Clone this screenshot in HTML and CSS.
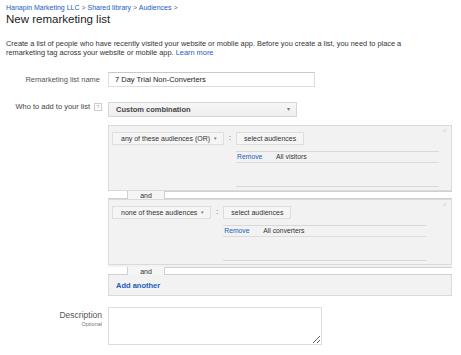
FILE: index.html
```html
<!DOCTYPE html>
<html>
<head>
<meta charset="utf-8">
<link rel="stylesheet" href="styles.css">
</head>
<body>
<div class="crumbs"><a class="lnk">Hanapin Marketing LLC</a> <span class="sep">&gt;</span> <a class="lnk">Shared library</a> <span class="sep">&gt;</span> <a class="lnk">Audiences</a> <span class="sep">&gt;</span></div>
<h1 class="title">New remarketing list</h1>
<p class="intro">Create a list of people who have recently visited your website or mobile app. Before you create a list, you need to place a<br>remarketing tag across your website or mobile app. <a class="lnk">Learn more</a></p>

<div class="row row-name">
  <div class="label">Remarketing list name</div>
  <div class="field"><div class="textbox">7 Day Trial Non-Converters</div></div>
</div>

<div class="row row-who">
  <div class="label">Who to add to your list <span class="help">?</span></div>
  <div class="field"><div class="select"><span>Custom combination</span><span class="caret">&#9662;</span></div></div>
</div>

<div class="row row-panel">
  <div class="label"></div>
  <div class="panel">
    <div class="group">
      <span class="close">&times;</span>
      <div class="btn op">any of these audiences (OR) <span class="caret-s">&#9662;</span></div>
      <div class="colon">:</div>
      <div class="right">
        <div class="btn sel">select audiences</div>
        <div class="list">
          <div class="item"><a class="lnk rm">Remove</a><span>All visitors</span></div>
        </div>
      </div>
    </div>
    <div class="androw"><div class="wbox wl"></div><div class="and">and</div><div class="wbox wr"></div></div>
    <div class="group g2">
      <span class="close">&times;</span>
      <div class="btn op">none of these audiences <span class="caret-s">&#9662;</span></div>
      <div class="colon">:</div>
      <div class="right">
        <div class="btn sel">select audiences</div>
        <div class="list">
          <div class="item"><a class="lnk rm">Remove</a><span>All converters</span></div>
        </div>
      </div>
    </div>
    <div class="androw a2"><div class="wbox wl"></div><div class="and">and</div><div class="wbox wr"></div></div>
    <div class="addrow"><a class="lnk add">Add another</a></div>
  </div>
</div>

<div class="row row-desc">
  <div class="label desc-label"><div class="dl">Description</div><div class="opt">Optional</div></div>
  <div class="field"><textarea class="ta"></textarea></div>
</div>
</body>
</html>
```

FILE: styles.css
```css
html, body { margin: 0; padding: 0; background: #fff; }
body {
  font-family: "Liberation Sans", Arial, Helvetica, sans-serif;
  font-size: 7.5px;
  line-height: 9px;
  color: #333;
  padding: 3px 6px 0 6px;
  width: 449px;
}
.lnk { color: #1a5bbf; text-decoration: none; }
.crumbs { font-size: 7px; line-height: 9px; color: #555; }
.sep { color: #666; }
.title { margin: 1px 0 0 0; font-size: 11.5px; line-height: 13px; font-weight: normal; color: #222; }
.intro { margin: 14px 0 0 0; font-size: 7.4px; line-height: 8.5px; color: #333; }

.row { display: flex; gap: 6px; }
.label { width: 96px; flex: none; text-align: right; font-size: 7.5px; color: #555; box-sizing: border-box; padding-right: 2px; }
.row-name { margin-top: 15px; align-items: center; }
.row-who { margin-top: 15px; align-items: center; }
.row-who .label { padding-right: 0; color: #444; display: flex; justify-content: flex-end; align-items: center; gap: 4px; margin-top: -6px; }
.help { display: inline-block; width: 6px; height: 6px; border: 1px solid #ccc; font-size: 5px; line-height: 6px; text-align: center; color: #aaa; }

.textbox {
  width: 207px; height: 15px; box-sizing: border-box;
  border: 1px solid #dcdcdc; border-top-color: #c8c8c8;
  font-size: 7.5px; line-height: 13px; padding-left: 6px; color: #222;
}
.select {
  width: 189px; height: 15px; box-sizing: border-box;
  border: 1px solid #d6d6d6; background: linear-gradient(#f6f6f6, #efefef);
  font-size: 7.5px; line-height: 13px; font-weight: bold; color: #444;
  display: flex; justify-content: space-between; padding: 0 6px 0 7px;
}
.caret { font-size: 6px; color: #777; font-weight: normal; }

.row-panel { margin-top: 8px; }
.panel { width: 344px; box-sizing: border-box; background: #f2f2f2; display: flex; flex-direction: column; }
.group {
  position: relative; display: flex; align-items: flex-start;
  border: 1px solid #dadada; background: #f2f2f2;
  padding: 6px 10px 3px 3px;
}
.close { position: absolute; top: 0; right: 4px; font-size: 8px; line-height: 9px; color: #dadada; }
.btn {
  height: 13px; box-sizing: border-box; border: 1px solid #dedede;
  background: #f5f5f5; font-size: 7px; line-height: 11px; color: #333;
  white-space: nowrap;
}
.op { padding: 0 6px 0 8px; }
.caret-s { font-size: 5px; color: #777; margin-left: 2px; vertical-align: 1px; }
.colon { width: 12px; text-align: center; font-size: 7px; line-height: 12px; color: #333; }
.right { width: 203px; display: flex; flex-direction: column; }
.sel { align-self: flex-start; padding: 0 7px 0 7px; width: 68px; }
.list { margin-top: 6px; height: 36px; box-sizing: border-box; border-top: 1px solid #d8d8d8; border-bottom: 1px solid #d8d8d8; }
.item { height: 10px; border-bottom: 1px solid #dcdcdc; font-size: 6.8px; line-height: 10px; color: #333; display: flex; }
.rm { width: 39px; padding-left: 1px; }

.androw { height: 8px; display: flex; background: #f5f5f5; }
.a2 { margin-top: 2px; }
.wbox { background: #fff; border: 1px solid #d0d0d0; box-sizing: border-box; }
.wl { width: 20px; border-left: none; border-top: none; }
.wr { flex: 1; border-right: none; }
.and { width: 36px; text-align: center; font-size: 7px; line-height: 9px; color: #333; }
.g2 { border-top: 1px solid #dadada; }

.addrow { height: 21px; border: 1px solid #dadada; border-top: none; box-sizing: border-box; padding: 6px 0 0 7px; font-size: 7.5px; line-height: 9px; }
.add { font-size: 7.5px; font-weight: bold; line-height: 9px; }

.row-desc { margin-top: 11px; align-items: flex-start; }
.desc-label { padding-right: 0; padding-top: 4px; }
.dl { font-size: 8.5px; line-height: 9px; color: #555; }
.opt { font-size: 5.5px; line-height: 7px; color: #777; margin-top: 1px; }
.ta {
  display: block; width: 214px; height: 38px; box-sizing: border-box; margin: 0;
  border: 1px solid #dcdcdc; resize: both; font-size: 7px; font-family: inherit;
}
```
